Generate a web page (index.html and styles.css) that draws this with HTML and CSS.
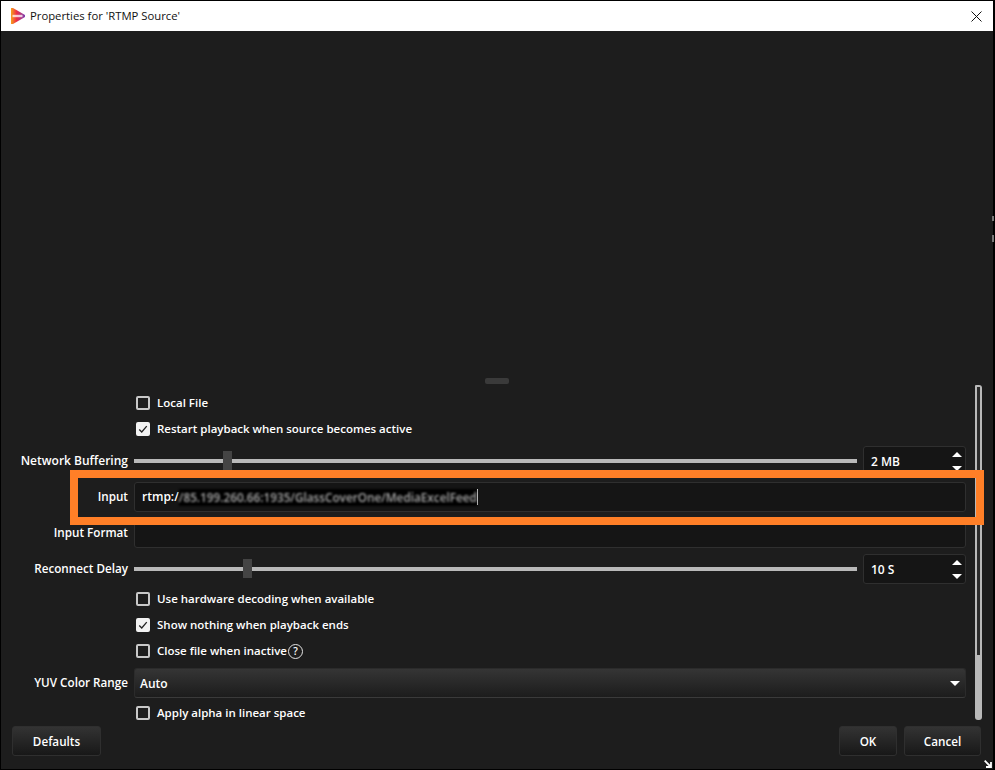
FILE: index.html
```html
<!DOCTYPE html>
<html lang="en">
<head>
<meta charset="utf-8">
<title>Properties for 'RTMP Source'</title>
<link rel="stylesheet" href="styles.css">
</head>
<body>
<div class="window">
  <header class="titlebar">
    <svg class="logo" viewBox="0 0 16 18" width="16" height="18" aria-hidden="true">
      <defs>
        <linearGradient id="lg" x1="0" y1="0" x2="1" y2="0">
          <stop offset="0" stop-color="#f7a11a"/>
          <stop offset="0.4" stop-color="#ee2f45"/>
          <stop offset="1" stop-color="#7b3fb5"/>
        </linearGradient>
      </defs>
      <polygon points="1,1 3,1 15,8 15,10 3,17 1,17" fill="url(#lg)"/>
      <rect x="2.5" y="7.8" width="10" height="2.4" fill="#fff" opacity="0.75"/>
    </svg>
    <span class="title">Properties for 'RTMP Source'</span>
    <svg class="close" viewBox="0 0 11 11" width="11" height="11" aria-hidden="true">
      <path d="M0.5 0.5 L10.5 10.5 M10.5 0.5 L0.5 10.5" stroke="#111" stroke-width="1" fill="none"/>
    </svg>
  </header>

  <div class="preview"></div>
  <div class="splitter"><span class="splitter-handle"></span></div>

  <main class="props">
    <form class="form">
      <div class="cell-empty"></div>
      <label class="check"><span class="box"></span>Local File</label>

      <div class="cell-empty"></div>
      <label class="check"><span class="box on"><svg viewBox="0 0 12 12" width="12" height="12"><path d="M1.5 6.5 L4.5 9.5 L10.5 2.5" stroke="#222" stroke-width="1.6" fill="none"/></svg></span>Restart playback when source becomes active</label>

      <div class="label label-wide">Network Buffering</div>
      <div class="slider-row">
        <div class="slider"><span class="thumb thumb-buffer"></span></div>
        <div class="spin">2 MB<span class="up"></span><span class="down"></span></div>
      </div>

      <div class="label">Input</div>
      <div class="field"><span>rtmp:/</span><span class="blurred"><span class="blurred-text">/85.199.260.66:1935/GlassCoverOne/MediaExcelFeed</span></span><span class="caret"></span></div>

      <div class="label">Input Format</div>
      <div class="field"></div>

      <div class="label">Reconnect Delay</div>
      <div class="slider-row">
        <div class="slider"><span class="thumb thumb-delay"></span></div>
        <div class="spin">10 S<span class="up"></span><span class="down"></span></div>
      </div>

      <div class="cell-empty"></div>
      <label class="check"><span class="box"></span>Use hardware decoding when available</label>

      <div class="cell-empty"></div>
      <label class="check"><span class="box on"><svg viewBox="0 0 12 12" width="12" height="12"><path d="M1.5 6.5 L4.5 9.5 L10.5 2.5" stroke="#222" stroke-width="1.6" fill="none"/></svg></span>Show nothing when playback ends</label>

      <div class="cell-empty"></div>
      <label class="check"><span class="box"></span>Close file when inactive<span class="help">?</span></label>

      <div class="label">YUV Color Range</div>
      <div class="combo">Auto<span class="combo-arrow"></span></div>

      <div class="cell-empty"></div>
      <label class="check"><span class="box"></span>Apply alpha in linear space</label>
    </form>
    <div class="scrollbar"><span class="scroll-thumb"></span></div>
  </main>

  <footer class="footer">
    <button class="btn btn-defaults" type="button">Defaults</button>
    <div class="footer-right">
      <button class="btn btn-ok" type="button">OK</button>
      <button class="btn btn-cancel" type="button">Cancel</button>
    </div>
  </footer>

  <svg class="grip" viewBox="0 0 8 8" width="8" height="8" aria-hidden="true">
    <path d="M0.7 0.7 L6.5 6.5 M7 2 V7 H2" stroke="#fff" stroke-width="1.8" fill="none"/>
  </svg>
  <span class="edge-mark edge-mark-a"></span>
  <span class="edge-mark edge-mark-b"></span>
  <div class="highlight"></div>
</div>
</body>
</html>
```

FILE: styles.css
```css
* { box-sizing: border-box; }
html, body { margin: 0; padding: 0; background: #000; }
body { width: 995px; height: 770px; overflow: hidden; }

.window {
  position: relative;
  width: 995px;
  height: 770px;
  display: flex;
  flex-direction: column;
  background: #1d1d1d;
  border: 1px solid #000;
  border-right-width: 2px;
  color: #fff;
  font: 600 12px/16px "Open Sans", "Noto Sans", sans-serif;
}

.titlebar {
  flex: none;
  height: 30px;
  background: #fff;
  color: #111;
  display: flex;
  align-items: center;
  padding: 0 11px 0 9px;
  font: 400 11.3px/16px "Open Sans", "Noto Sans", sans-serif;
}
.logo { margin-right: 4px; }
.title { flex: 1; }
.preview { flex: 1; }
.splitter {
  flex: none;
  height: 9px;
  display: flex;
  justify-content: center;
  padding-top: 2px;
}
.splitter-handle {
  width: 24px;
  height: 6px;
  background: #3a3a3a;
  border-radius: 2px;
}

.props {
  flex: none;
  height: 341px;
  display: flex;
  align-items: flex-start;
  overflow: hidden;
}
.form {
  width: 965px;
  display: grid;
  grid-template-columns: 127px 832px;
  column-gap: 6px;
  row-gap: 6px;
  padding-top: 9px;
  flex: none;
}
.scrollbar {
  flex: none;
  width: 7px;
  height: 335px;
  margin-left: 9px;
  background: #b9b9b9;
  border-radius: 1px 3px 3px 3px;
  padding: 2px 2px 0;
}
.scroll-thumb {
  display: block;
  width: 3px;
  height: 268px;
  background: #2a2a2a;
}

.label { text-align: right; align-self: center; white-space: nowrap; font-size: 11.7px; padding-bottom: 2px; }
.label-wide { font-size: 12px; padding-bottom: 0; }
.check { display: flex; align-items: center; height: 20px; padding-left: 2px; white-space: nowrap; font-size: 11.5px; position: relative; top: -1px; }
.box {
  flex: none;
  width: 14px;
  height: 14px;
  border: 2px solid #c8c8c8;
  border-radius: 2px;
  margin-right: 7px;
  display: flex;
  align-items: center;
  justify-content: center;
}
.box.on { background: #f2f2f2; border-color: #f2f2f2; }
.help {
  width: 15px;
  height: 15px;
  margin-left: 1px;
  border: 1.5px solid #e4e4e4;
  border-radius: 50%;
  font-size: 10px;
  line-height: 12px;
  text-align: center;
}

.slider-row { display: flex; align-items: center; gap: 6px; height: 30px; }
.slider {
  position: relative;
  flex: 1;
  height: 4px;
  background: #b9b9b9;
}
.thumb {
  position: absolute;
  top: -8px;
  width: 9px;
  height: 19px;
  background: #444;
}
.thumb-buffer { left: 89px; }
.thumb-delay { left: 109px; }

.spin {
  position: relative;
  flex: none;
  width: 103px;
  height: 30px;
  padding: 7px;
  background: #151515;
  border: 1px solid #2f2f2f;
  border-radius: 3px;
}
.up, .down {
  position: absolute;
  right: 3px;
  width: 0;
  height: 0;
  border-left: 5px solid transparent;
  border-right: 5px solid transparent;
}
.up { top: 5px; border-bottom: 5px solid #fff; }
.down { top: 19px; border-top: 5px solid #fff; }

.field {
  display: flex;
  align-items: center;
  height: 30px;
  padding: 0 7px;
  background: #151515;
  border: 1px solid #2f2f2f;
  border-radius: 3px;
}
.blurred { background: #000; filter: blur(0.8px); height: 17px; display: block; white-space: nowrap; }
.blurred-text { color: #a8a8a8; line-height: 17px; font-size: 11.75px; }
.caret { width: 1px; height: 16px; background: #fff; }

.combo {
  position: relative;
  height: 30px;
  padding: 7px 5px;
  background: linear-gradient(#353535, #1c1c1c);
  border: 1px solid #2b2b2b;
  border-bottom-color: #3a3a3a;
  border-radius: 3px;
}
.combo-arrow {
  position: absolute;
  right: 5px;
  top: 12px;
  width: 0;
  height: 0;
  border-left: 5px solid transparent;
  border-right: 5px solid transparent;
  border-top: 5px solid #fff;
}

.footer {
  flex: none;
  height: 43px;
  display: flex;
  justify-content: space-between;
  padding: 0 12px 0 11px;
}
.footer-right { display: flex; gap: 7px; }
.btn {
  height: 30px;
  color: #fff;
  font: inherit;
  font-size: 11.7px;
  background: linear-gradient(#333, #181818);
  border: 1px solid #2f2f2f;
  border-radius: 3px;
  padding: 0;
}
.btn-defaults { width: 89px; }
.btn-ok { width: 58px; }
.btn-cancel { width: 77px; }

.grip { position: absolute; right: 1px; bottom: 1px; }
.edge-mark { position: absolute; right: -1px; width: 2px; background: #777; }
.edge-mark-a { top: 215px; height: 5px; }
.edge-mark-b { top: 234px; height: 7px; }
.highlight {
  position: absolute;
  left: 69px;
  top: 469px;
  width: 914px;
  height: 55px;
  border: 8px solid #ff7f27;
}
```
